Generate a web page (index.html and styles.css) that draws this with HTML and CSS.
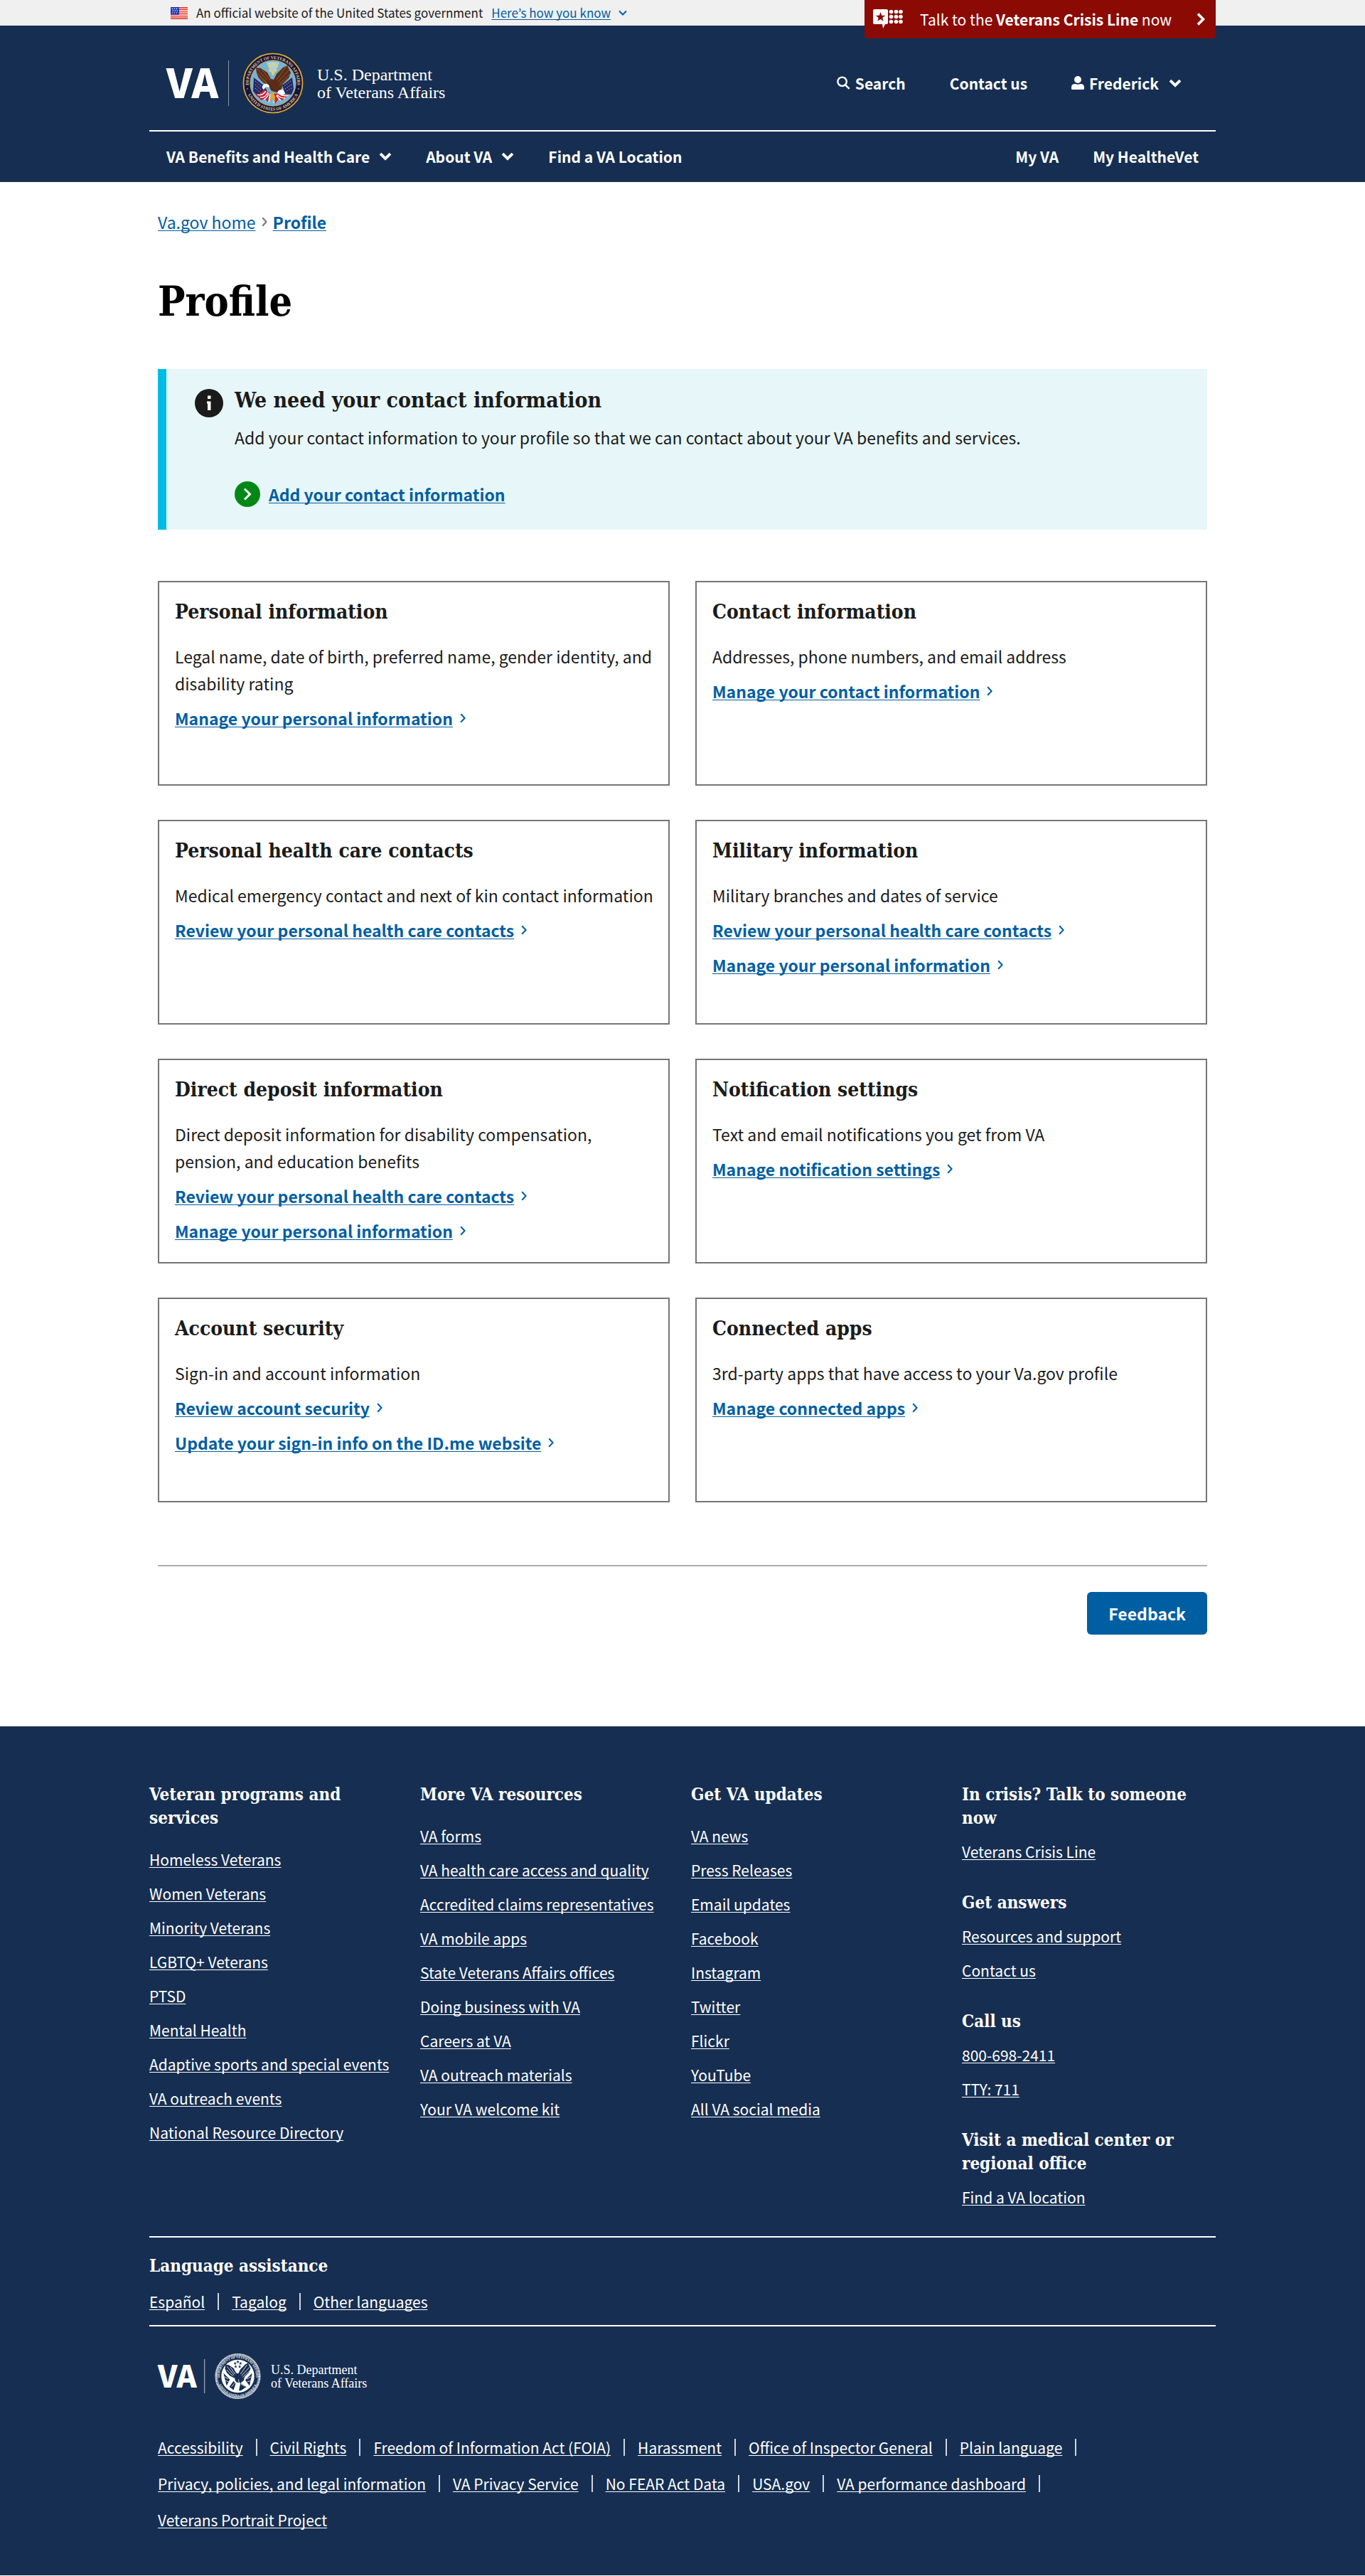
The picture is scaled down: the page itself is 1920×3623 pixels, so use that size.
FILE: index.html
```html
<!DOCTYPE html>
<html lang="en">
<head>
<meta charset="utf-8">
<meta name="viewport" content="width=device-width, initial-scale=1">
<title>Profile | Veterans Affairs</title>
<link rel="stylesheet" href="styles.css">
</head>
<body>
<svg class="sprite" aria-hidden="true">
  <symbol id="right" viewBox="0 0 8 14"><path d="M1.200 1.200 6.600 7l-5.400 5.800" fill="none" stroke="currentColor" stroke-width="2"/></symbol>
  <symbol id="down" viewBox="0 0 18 12"><path d="M2 2.200 9 9l7-6.800" fill="none" stroke="currentColor" stroke-width="3.900"/></symbol>
</svg>

<div class="banner">
  <div class="wrap banner-row">
    <svg class="flag" viewBox="0 0 24 17" aria-hidden="true">
      <path fill="#fff" d="M0 0h24v17H0z"/>
      <path stroke="#e52c17" stroke-width="1.400" d="M0 .7h24M0 3.300h24M0 5.900h24M0 8.500h24M0 11.100h24M0 13.700h24M0 16.300h24"/>
      <path fill="#1e33b1" d="M0 0h12v10.500H0z"/>
      <path stroke="#fff" stroke-width="1.200" stroke-dasharray="1.500 1.500" d="M1.500 2.400h9.500M2.500 5.200h8M1.500 8h9.500"/>
    </svg>
    <span>An official website of the United States government</span>
    <button class="how" type="button"><span>Here’s how you know</span>
      <svg class="how-icon" viewBox="0 0 12 8" aria-hidden="true"><path d="M1 1.500 6 6.500l5-5" fill="none" stroke="currentColor" stroke-width="2"/></svg>
    </button>
    <a class="crisis" href="#crisis">
      <svg class="crisis-icon" viewBox="0 0 42 28" aria-hidden="true">
        <path fill="#fff" fill-rule="evenodd" d="M2 0h17q2 0 2 2v17q0 2-2 2h-2l-3 6-1-6H2q-2 0-2-2V2Q0 0 2 0Zm8.500 4-1.700 4.700-5 .1 3.900 3.100-1.400 4.800 4.200-2.800 4.200 2.800-1.400-4.800 3.900-3.100-5-.1Z"/>
        <g fill="#fff"><circle cx="25.500" cy="3.500" r="2.800"/><circle cx="32.500" cy="3.500" r="2.800"/><circle cx="39" cy="3.500" r="2.800"/><circle cx="25.500" cy="10.500" r="2.800"/><circle cx="32.500" cy="10.500" r="2.800"/><circle cx="39" cy="10.500" r="2.800"/><circle cx="25.500" cy="17.500" r="2.800"/><circle cx="32.500" cy="17.500" r="2.800"/><circle cx="39" cy="17.500" r="2.800"/></g>
      </svg>
      <span>Talk to the <b>Veterans Crisis Line</b> now</span>
      <svg class="crisis-go" viewBox="0 0 12 18" aria-hidden="true"><path d="M2 1.500 9.500 9 2 16.500" fill="none" stroke="#fff" stroke-width="3.600"/></svg>
    </a>
  </div>
</div>

<header class="site-header">
  <div class="wrap">
    <div class="masthead">
      <a href="#home" aria-label="VA home">
        <svg class="logo" viewBox="0 0 400 88" role="img" aria-label="U.S. Department of Veterans Affairs">
          <defs>
            <path id="arc-top" d="M-33.500 7A34.200 34.200 0 1 1 33.500 7"/>
            <path id="arc-bottom" d="M-37.200 10.500A38.700 38.700 0 0 0 37.200 10.500"/>
          </defs>
          <text class="logo-va" x="0" y="65">VA</text>
          <path stroke="#8b97ab" stroke-width="1" d="M87.500 12v64"/>
          <g transform="translate(150 44)">
            <circle r="42.600" fill="#17143f"/>
            <circle r="41.600" fill="none" stroke="#d9a834" stroke-width="1.800"/>
            <circle r="32.200" fill="#78b3d1" stroke="#d9a834" stroke-width=".8"/>
            <path fill="#a9d0e2" d="M-9-29 0-10l9-19a31 31 0 0 0-18 0Z"/>
            <g fill="#f4d34c"><path id="star" d="m0-30 .8 1.900 2.100.1-1.600 1.400.5 2.100L0-25.600l-1.800 1.100.5-2.100-1.600-1.400 2.100-.1Z"/><use href="#star" x="-5" y="3"/><use href="#star" x="5" y="3"/><use href="#star" x="-4" y="9"/><use href="#star" x="3.500" y="9"/><use href="#star" x="0" y="13"/></g>
            <path fill="#262a63" d="M-27-8-13 3-7 13l-5 5-10 1-6-8ZM27-8 13 3l4 12 9 1 3-8Z"/>
            <path stroke="#fff" stroke-width=".9" stroke-dasharray="1 2.200" d="M-25-3l8 7M-25 2l9 8M-25 7l8 7M25-3l-9 7M26 2l-9 6M26 7l-8 5"/>
            <path fill="#c92335" d="M-26 13c5 5 9 1 13-4l8 4-2 14-4-5-6 2Zm50 2c-6 3-9 0-14-1l-9 1 2 14 5-7 5 2Z"/>
            <path fill="none" stroke="#fff" stroke-width="1.300" d="M-22 16c5 2 9-1 12-5M-18 20c5 1 9-3 11-8M-13 23c4-2 6-5 7-9M-6 27l2-11M1 28V16M22 17c-5 2-9 0-13-2M17 21c-5 0-9-2-11-5M11 24c-3-2-5-4-6-7"/>
            <path fill="#5a2c18" d="M-24-22l7 1 9 6 5 9 4 1 4-8 9-9 6-3 5 10-3 8-8 8-2 7-6 5-8-2-5-8-7-4-6-6-3-7Z"/>
            <path fill="none" stroke="#935a35" stroke-width="1" d="M-22-20l14 16M-16-20l12 16M-23-15l14 14M-20-9l11 9M19-24 5-5M23-19 7-2M24-13 9 1M21-7 9 4"/>
            <path fill="#fff" d="M-13 2c4-3 8 0 8 4l-5-1-3 4c-3-2-3-5 0-7ZM8 10l6-1 3 5-4 4-7-4Z"/>
            <path fill="#e4a724" d="M-3 15l3-3 3 7-1 9-3-7-3 4Z"/>
            <g class="seal-text" fill="#e8cf8b"><text><textPath href="#arc-top" startOffset="50%">DEPARTMENT OF VETERANS AFFAIRS</textPath></text><text><textPath href="#arc-bottom" startOffset="50%">UNITED STATES OF AMERICA</textPath></text></g>
            <circle cx="-36" cy="8" r=".8" fill="#e8cf8b"/><circle cx="36" cy="8" r=".8" fill="#e8cf8b"/>
          </g>
          <text class="logo-name" x="212" y="40">U.S. Department</text>
          <text class="logo-name" x="212" y="65">of Veterans Affairs</text>
        </svg>
      </a>
      <div class="actions">
        <button type="button" class="action">
          <svg class="icon-search" viewBox="0 0 19 19" aria-hidden="true"><g fill="none" stroke="currentColor" stroke-width="2.400"><circle cx="7.600" cy="7.800" r="6.200"/><path d="m12 12.300 5.600 5.500"/></g></svg>
          Search</button>
        <a class="action" href="#contact">Contact us</a>
        <button type="button" class="action">
          <svg class="icon-user" viewBox="0 0 18 19" aria-hidden="true"><path fill="currentColor" d="M9 0a5 5 0 1 1 0 10A5 5 0 0 1 9 0ZM0 16q0-5 5-5 4 1.500 8 0 5 0 5 5v1.500Q18 19 16.500 19h-15Q0 19 0 17.500Z"/></svg>
          Frederick <svg class="down" aria-hidden="true"><use href="#down"/></svg></button>
      </div>
    </div>
    <nav class="nav" aria-label="Primary">
      <button type="button" class="nav-item">VA Benefits and Health Care <svg class="down" aria-hidden="true"><use href="#down"/></svg></button>
      <button type="button" class="nav-item">About VA <svg class="down" aria-hidden="true"><use href="#down"/></svg></button>
      <a class="nav-item" href="#find">Find a VA Location</a>
      <a class="nav-item nav-end" href="#myva">My VA</a>
      <a class="nav-item" href="#mhv">My HealtheVet</a>
    </nav>
  </div>
</header>

<main class="main">
  <nav class="crumbs" aria-label="Breadcrumb">
    <a href="#home">Va.gov home</a>
    <svg class="right crumb-sep" aria-hidden="true"><use href="#right"/></svg>
    <a class="current" href="#profile" aria-current="page">Profile</a>
  </nav>
  <h1>Profile</h1>

  <section class="alert">
    <svg class="alert-icon" viewBox="0 0 40 40" aria-hidden="true"><circle cx="20" cy="20" r="20" fill="#1b1b1b"/><path fill="#fff" d="M18 9.500h4.500v4.500H18zM17 17.500h5.500V30H18v-9.500h-1z"/></svg>
    <div>
      <h2>We need your contact information</h2>
      <p>Add your contact information to your profile so that we can contact about your VA benefits and services.</p>
      <a class="action-link" href="#add">
        <svg class="action-icon" viewBox="0 0 36 36" aria-hidden="true"><circle cx="18" cy="18" r="18" fill="#008817"/><path d="m14 10.500 7.500 7.500-7.500 7.500" fill="none" stroke="#fff" stroke-width="3"/></svg>
        <span>Add your contact information</span>
      </a>
    </div>
  </section>

  <div class="cards">
    <section class="card">
      <h2>Personal information</h2>
      <p>Legal name, date of birth, preferred name, gender identity, and disability rating</p>
      <a class="card-link" href="#1"><span>Manage your personal information</span><svg class="right" aria-hidden="true"><use href="#right"/></svg></a>
    </section>
    <section class="card">
      <h2>Contact information</h2>
      <p>Addresses, phone numbers, and email address</p>
      <a class="card-link" href="#2"><span>Manage your contact information</span><svg class="right" aria-hidden="true"><use href="#right"/></svg></a>
    </section>
    <section class="card">
      <h2>Personal health care contacts</h2>
      <p>Medical emergency contact and next of kin contact information</p>
      <a class="card-link" href="#3"><span>Review your personal health care contacts</span><svg class="right" aria-hidden="true"><use href="#right"/></svg></a>
    </section>
    <section class="card">
      <h2>Military information</h2>
      <p>Military branches and dates of service</p>
      <a class="card-link" href="#4"><span>Review your personal health care contacts</span><svg class="right" aria-hidden="true"><use href="#right"/></svg></a>
      <a class="card-link" href="#5"><span>Manage your personal information</span><svg class="right" aria-hidden="true"><use href="#right"/></svg></a>
    </section>
    <section class="card">
      <h2>Direct deposit information</h2>
      <p>Direct deposit information for disability compensation, pension, and education benefits</p>
      <a class="card-link" href="#6"><span>Review your personal health care contacts</span><svg class="right" aria-hidden="true"><use href="#right"/></svg></a>
      <a class="card-link" href="#7"><span>Manage your personal information</span><svg class="right" aria-hidden="true"><use href="#right"/></svg></a>
    </section>
    <section class="card">
      <h2>Notification settings</h2>
      <p>Text and email notifications you get from VA</p>
      <a class="card-link" href="#8"><span>Manage notification settings</span><svg class="right" aria-hidden="true"><use href="#right"/></svg></a>
    </section>
    <section class="card">
      <h2>Account security</h2>
      <p>Sign-in and account information</p>
      <a class="card-link" href="#9"><span>Review account security</span><svg class="right" aria-hidden="true"><use href="#right"/></svg></a>
      <a class="card-link" href="#10"><span>Update your sign-in info on the ID.me website</span><svg class="right" aria-hidden="true"><use href="#right"/></svg></a>
    </section>
    <section class="card">
      <h2>Connected apps</h2>
      <p>3rd-party apps that have access to your Va.gov profile</p>
      <a class="card-link" href="#11"><span>Manage connected apps</span><svg class="right" aria-hidden="true"><use href="#right"/></svg></a>
    </section>
  </div>

  <div class="feedback-row"><button type="button" class="feedback">Feedback</button></div>
</main>

<footer class="footer">
  <div class="wrap">
    <div class="columns">
      <section>
        <h2>Veteran programs and services</h2>
        <ul class="links">
          <li><a href="#f1">Homeless Veterans</a></li>
          <li><a href="#f2">Women Veterans</a></li>
          <li><a href="#f3">Minority Veterans</a></li>
          <li><a href="#f4">LGBTQ+ Veterans</a></li>
          <li><a href="#f5">PTSD</a></li>
          <li><a href="#f6">Mental Health</a></li>
          <li><a href="#f7">Adaptive sports and special events</a></li>
          <li><a href="#f8">VA outreach events</a></li>
          <li><a href="#f9">National Resource Directory</a></li>
        </ul>
      </section>
      <section>
        <h2>More VA resources</h2>
        <ul class="links">
          <li><a href="#r1">VA forms</a></li>
          <li><a href="#r2">VA health care access and quality</a></li>
          <li><a href="#r3">Accredited claims representatives</a></li>
          <li><a href="#r4">VA mobile apps</a></li>
          <li><a href="#r5">State Veterans Affairs offices</a></li>
          <li><a href="#r6">Doing business with VA</a></li>
          <li><a href="#r7">Careers at VA</a></li>
          <li><a href="#r8">VA outreach materials</a></li>
          <li><a href="#r9">Your VA welcome kit</a></li>
        </ul>
      </section>
      <section>
        <h2>Get VA updates</h2>
        <ul class="links">
          <li><a href="#u1">VA news</a></li>
          <li><a href="#u2">Press Releases</a></li>
          <li><a href="#u3">Email updates</a></li>
          <li><a href="#u4">Facebook</a></li>
          <li><a href="#u5">Instagram</a></li>
          <li><a href="#u6">Twitter</a></li>
          <li><a href="#u7">Flickr</a></li>
          <li><a href="#u8">YouTube</a></li>
          <li><a href="#u9">All VA social media</a></li>
        </ul>
      </section>
      <div class="help">
        <section>
          <h2>In crisis? Talk to someone now</h2>
          <ul class="links"><li><a href="#h1">Veterans Crisis Line</a></li></ul>
        </section>
        <section>
          <h2>Get answers</h2>
          <ul class="links"><li><a href="#h2">Resources and support</a></li><li><a href="#h3">Contact us</a></li></ul>
        </section>
        <section>
          <h2>Call us</h2>
          <ul class="links"><li><a href="#h4">800-698-2411</a></li><li><a href="#h5">TTY: 711</a></li></ul>
        </section>
        <section>
          <h2>Visit a medical center or regional office</h2>
          <ul class="links"><li><a href="#h6">Find a VA location</a></li></ul>
        </section>
      </div>
    </div>

    <section class="language">
      <h2>Language assistance</h2>
      <ul class="bar-list">
        <li><a href="#es" lang="es">Español</a></li>
        <li><a href="#tl">Tagalog</a></li>
        <li><a href="#other">Other languages</a></li>
      </ul>
    </section>

    <div class="legal">
      <svg class="footer-logo" viewBox="0 0 400 88" role="img" aria-label="U.S. Department of Veterans Affairs">
        <text class="logo-va" x="0" y="65">VA</text>
        <path stroke="#8b97ab" stroke-width="2" d="M87.500 12v64"/>
        <g transform="translate(150 44)" fill="#fff">
          <circle r="41" fill="none" stroke="#fff" stroke-width="3.400" stroke-dasharray="1.700 .8"/>
          <circle r="38.500" fill="none" stroke="#fff" stroke-width=".8"/>
          <circle r="31"/>
          <g class="seal-text"><text><textPath href="#arc-top" startOffset="50%">DEPARTMENT OF VETERANS AFFAIRS</textPath></text><text><textPath href="#arc-bottom" startOffset="50%">UNITED STATES OF AMERICA</textPath></text></g>
          <g fill="#162e51"><use href="#star"/><use href="#star" x="-5" y="3"/><use href="#star" x="5" y="3"/><use href="#star" x="-4" y="9"/><use href="#star" x="3.500" y="9"/>
            <path d="M-23-22l6 1 9 6 5 9 4 1 4-8 9-9 5-3 5 10-3 8-8 8-2 7-6 5-8-2-5-8-7-4-6-6-3-7ZM-27-6l12 12-6 12ZM27-6 14 7l8 11ZM-16 20l8-11 4 5-4 12ZM16 20 5 13 2 27h4Z"/></g>
          <path fill="none" stroke="#fff" stroke-width="1.100" d="M-20-18-7-2M-14-17l9 13M-21-12-9 0M17-21 5-4M22-17 7-1M22-10 9 2M-7 7l4 6M1 6l2 8M-25 1l7 4M-23 8l6 3M25 1l-8 4M24 9l-6 1M-12 20l6-7M13 19l-7-4"/>
          <path d="M-12 3c4-2 7 0 7 4l-5-1-3 3c-2-2-2-4 1-6Z"/>
        </g>
        <text class="logo-name" x="212" y="40">U.S. Department</text>
        <text class="logo-name" x="212" y="65">of Veterans Affairs</text>
      </svg>
      <ul class="bar-list">
        <li><a href="#l1">Accessibility</a></li>
        <li><a href="#l2">Civil Rights</a></li>
        <li><a href="#l3">Freedom of Information Act (FOIA)</a></li>
        <li><a href="#l4">Harassment</a></li>
        <li><a href="#l5">Office of Inspector General</a></li>
        <li><a href="#l6">Plain language</a></li>
        <li><a href="#l7">Privacy, policies, and legal information</a></li>
        <li><a href="#l8">VA Privacy Service</a></li>
        <li><a href="#l9">No FEAR Act Data</a></li>
        <li><a href="#l10">USA.gov</a></li>
        <li><a href="#l11">VA performance dashboard</a></li>
        <li><a href="#l12">Veterans Portrait Project</a></li>
      </ul>
    </div>
  </div>
</footer>
</body>
</html>
```
FILE: styles.css
```css
:root {
  --sans: "Noto Sans CJK KR", "Noto Sans", sans-serif;
  --serif: "DejaVu Serif Condensed", "DejaVu Serif", serif;
  --navy: #162e51;
  --link: #005ea2;
  --ink: #1b1b1b;
}

* { box-sizing: border-box; }

body {
  margin: 0;
  color: var(--ink);
  background: #fff;
  font: 23px/38px var(--sans);
}

h1, h2, p, ul { margin: 0; padding: 0; }
ul { list-style: none; }
h1, h2 { font-family: var(--serif); font-weight: 700; }
svg { flex: none; }

a {
  color: var(--link);
  text-decoration-thickness: 1px;
  text-underline-offset: 2px;
  text-decoration-skip-ink: none;
}

button {
  padding: 0;
  border: 0;
  background: none;
  font: inherit;
  color: inherit;
  cursor: pointer;
}

.sprite { display: block; width: 0; height: 0; }
.wrap { max-width: 1500px; margin: 0 auto; }
.down { width: 18px; height: 12px; }
.right { width: 8px; height: 14px; }

/* Government banner */
.banner { background: #f0f0f0; }
.banner-row {
  position: relative;
  display: flex;
  align-items: center;
  gap: 12px;
  padding-left: 30px;
  font-size: 17px;
  line-height: 36px;
}
.flag { width: 24px; height: 17px; }
.how { display: flex; align-items: center; gap: 11px; color: var(--link); }
.how span {
  text-decoration: underline 1px;
  text-underline-offset: 2px;
  text-decoration-skip-ink: none;
}
.how-icon { width: 12px; height: 8px; }
.crisis {
  position: absolute;
  top: 0;
  right: 0;
  display: flex;
  align-items: center;
  width: 494px;
  height: 54px;
  padding: 0 15px 0 12px;
  border-radius: 0 0 5px 5px;
  background: #8b0a03;
  color: #fff;
  font-size: 21px;
  text-decoration: none;
}
.crisis-icon { width: 42px; height: 28px; margin-right: 24px; }
.crisis-go { width: 12px; height: 18px; margin-left: auto; }

/* Header */
.site-header {
  background: var(--navy);
  color: #fff;
  font-size: 21px;
  font-weight: 700;
  line-height: 32px;
}
.site-header a { color: #fff; text-decoration: none; }
.masthead {
  display: flex;
  align-items: center;
  justify-content: space-between;
  min-height: 149px;
  padding: 14px 48px 0 24px;
  border-bottom: 2px solid #fff;
}
.logo { display: block; width: 400px; height: 88px; overflow: visible; }
.logo-va { font: 900 57px var(--sans); fill: #fff; }
.logo-name { font: 24px "Liberation Serif", serif; fill: #fff; }
.seal-text { font: 700 6px "Liberation Serif", serif; text-anchor: middle; }
.actions { display: flex; gap: 62px; }
.action { display: flex; align-items: center; gap: 7px; }
.icon-search { width: 19px; height: 19px; }
.icon-user { width: 18px; height: 19px; }
.action .down { margin-left: 7px; }
.nav { display: flex; gap: 48px; padding: 19px 24px 20px; }
.nav-item { display: flex; align-items: center; gap: 13px; }
.nav-end { margin-left: auto; }

/* Main */
.main { max-width: 1476px; margin: 0 auto; padding: 38px 0 129px; }
.crumbs { display: flex; align-items: center; gap: 8px; line-height: 36px; }
.crumb-sep { color: #757575; }
.current { font-weight: 700; }
h1 { margin: 58px 0 59px; color: #000; font-size: 57px; line-height: 72px; }

.alert {
  display: flex;
  gap: 16px;
  padding: 24px 40px 32px;
  border-left: 12px solid #00bde3;
  background: #e7f6f8;
}
.alert-icon { width: 40px; height: 40px; margin-top: 4px; }
.alert h2 { margin-bottom: 13px; font-size: 30px; line-height: 40px; }
.action-link {
  display: flex;
  align-items: center;
  gap: 12px;
  margin-top: 43px;
  font-weight: 700;
  line-height: 36px;
}
.action-icon { width: 36px; height: 36px; }

.cards {
  display: grid;
  grid-template-columns: 1fr 1fr;
  gap: 48px 36px;
  margin-top: 72px;
}
.card {
  min-height: 288px;
  padding: 24px 16px 20px 22px;
  border: 2px solid #757575;
}
.card h2 { margin-bottom: 25px; font-size: 28px; line-height: 36px; }
.card-link {
  display: flex;
  align-items: center;
  gap: 10px;
  margin-top: 11px;
  font-weight: 700;
}

.feedback-row {
  display: flex;
  justify-content: flex-end;
  margin-top: 88px;
  padding-top: 36px;
  border-top: 2px solid #a9aeb1;
}
.feedback {
  padding: 11px 30px;
  border-radius: 6px;
  background: var(--link);
  color: #fff;
  font-weight: 700;
}

/* Footer */
.footer {
  padding: 79px 0 62px;
  background: var(--navy);
  color: #fff;
  font-size: 21px;
  line-height: 32px;
}
.footer a { color: #fff; }
.footer h2 { font-size: 24px; line-height: 33px; }
.columns {
  display: grid;
  grid-template-columns: repeat(4, 1fr);
  gap: 24px;
  padding-bottom: 39px;
}
.links { display: grid; gap: 16px; margin-top: 26px; }
.help { display: grid; gap: 39px; align-content: start; }
.help .links { margin-top: 15px; }

.language {
  padding: 23px 0 17px;
  border: solid #fff;
  border-width: 2px 0;
}
.language h2 { margin-bottom: 18px; }
.bar-list { display: flex; flex-wrap: wrap; gap: 19px 18px; }
.bar-list li { display: flex; align-items: center; gap: 18px; }
.bar-list li:not(:last-child)::after {
  content: "";
  width: 2px;
  height: 24px;
  background: #d0d5dc;
}
.legal { padding: 37px 12px 0; }
.footer-logo { display: block; width: 300px; height: 66px; margin-bottom: 51px; overflow: visible; }
```
